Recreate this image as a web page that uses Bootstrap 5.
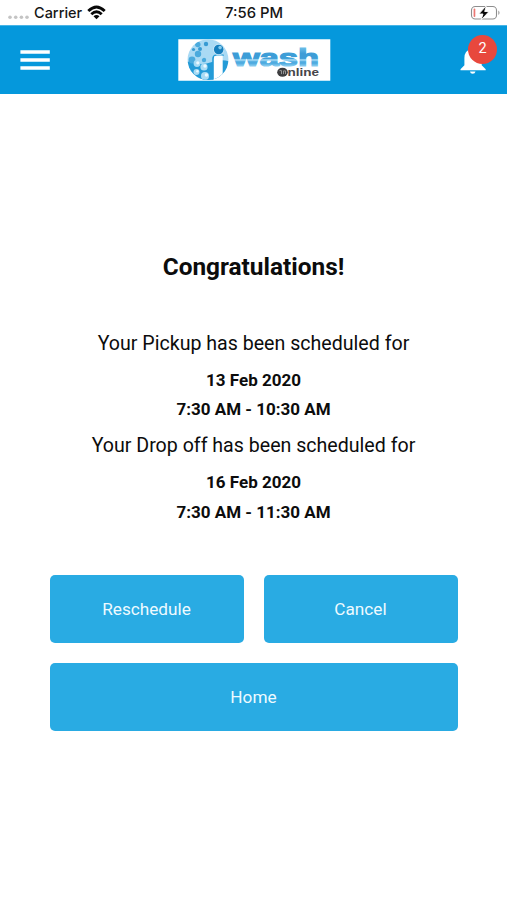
<!DOCTYPE html>
<html lang="en">
<head>
<meta charset="utf-8">
<meta name="viewport" content="width=device-width, initial-scale=1">
<title>iWash Online</title>
<link href="https://cdn.jsdelivr.net/npm/bootstrap@5.3.0/dist/css/bootstrap.min.css" rel="stylesheet">
<style>
body { font-family: Roboto, sans-serif; color: #0c0c0c; min-height: 900px; background: #fff; }
svg { display: block; }
.status-bar { height: 25px; font: 500 14.8px/26px Inter, sans-serif; color: #151515; padding: 0 6px 0 7px; }
.status-side { flex: 1 1 0; }
.carrier { font-size: 14.5px; margin: 0 5px 0 5px; }
.app-bar { height: 68.5px; background: #0598dc; padding: 0 20px; border-top: 1px solid #48b5e7; }
.brand-logo { margin: 0 2px 0 0; }
.menu-side { width: 30px; }
.bell { width: 26px; margin: 1px 1px 0 0; }
.count { top: -11.5px; left: 8px; width: 29px; height: 29px; background: #e8483d; color: #fff; font-size: 14.5px; line-height: 28px; }
.title { font-size: 24.4px; line-height: 32px; font-weight: 700; margin: 157.5px 0 42.5px; }
.label-line { font-size: 19.6px; line-height: 36px; }
.value-line { font-size: 17px; line-height: 29.4px; font-weight: 700; }
.actions { width: 408px; margin: 47.6px auto 0; gap: 20px; }
.action-row { gap: 20px; }
.btn-wash { --bs-btn-color: #eefaff; --bs-btn-bg: #29abe3; --bs-btn-hover-color: #fff; --bs-btn-hover-bg: #1c9cd4; --bs-btn-border-width: 0; --bs-btn-border-radius: 5px; --bs-btn-font-size: 17.2px; --bs-btn-padding-y: 0; height: 68px; padding-top: 2px; }
</style>
<script src="https://cdn.jsdelivr.net/npm/bootstrap@5.3.0/dist/js/bootstrap.bundle.min.js"></script>
</head>
<body>
<div class="status-bar d-flex align-items-center">
  <div class="status-side d-flex align-items-center">
    <svg width="22" height="26" fill="#c4c4c4"><circle cx="3" cy="17.3" r="1.8"/><circle cx="8.7" cy="17.3" r="1.8"/><circle cx="14.4" cy="17.3" r="1.8"/><circle cx="20" cy="17.3" r="1.8"/></svg>
    <span class="carrier">Carrier</span>
    <svg width="19" height="15" viewBox="0 0 19 15" fill="none" stroke="#080808" stroke-width="2.8"><path d="M1.3 6.1Q9.5-2 17.7 6.1M4.3 9.2q5.2-4.9 10.4 0"/><path d="M6.5 11.3q3-2.5 6 0l-3 3z" fill="#080808" stroke="none"/></svg>
  </div>
  <div>7:56 PM</div>
  <div class="status-side d-flex justify-content-end">
    <svg width="31" height="16" viewBox="0 0 31 16"><rect x="1.5" y="1.5" width="25" height="12.5" rx="3.8" fill="#fff" stroke="#8d8d8d" stroke-width="1.1"/><path d="M28.4 5.5q2.2 2.2 0 4.6z" fill="#8d8d8d"/><rect x="3.6" y="3.6" width="1.7" height="8.4" rx=".8" fill="#ec7773"/><path d="M16.4.6 8.8 9h4.2l-2 6.2 8-8.7h-4.3z" fill="#080808" stroke="#fff" stroke-width=".9"/></svg>
  </div>
</div>

<nav class="app-bar d-flex align-items-center justify-content-between">
  <a class="menu-side" href="#" aria-label="Menu"><svg width="30" height="20" fill="#fff"><path d="M.4.2h29.4v3.6H.4zM.4 8.2h29.4v3.6H.4zM.4 16.2h29.4v3.6H.4z"/></svg></a>
  <svg class="brand-logo" width="153" height="42" viewBox="0 0 153 42" role="img" aria-label="iWash Online">
    <defs>
      <clipPath id="disc"><circle cx="30" cy="20.6" r="20.4"/></clipPath>
      <linearGradient id="stripe" gradientUnits="userSpaceOnUse" x1="0" y1="9" x2="0" y2="27">
        <stop offset="0" stop-color="#69bce7"/><stop offset=".3" stop-color="#3d9dd7"/><stop offset=".58" stop-color="#3d9dd7"/><stop offset=".63" stop-color="#8fceef"/><stop offset=".71" stop-color="#8fceef"/><stop offset=".76" stop-color="#4eabe0"/><stop offset=".85" stop-color="#4eabe0"/><stop offset="1" stop-color="#8bcdef"/>
      </linearGradient>
    </defs>
    <path fill="#fff" d="M.3.3h152v41.5H.3z"/>
    <g clip-path="url(#disc)">
      <path fill="#aadaf4" d="M8 0h45v42H8z"/>
      <path fill="#249bd7" d="M8 23q6-1.5 11 1t15-1 19 0v20H8z"/>
      <path fill="#249bd7" d="M34.2 42V20q0-4.6 4-4.6h7.4v1.6H36V42z"/>
      <path fill="#fff" d="M35.8 42V20q0-3.6 3.6-3.6h5.3V42z"/>
      <g fill="#4aaadd"><circle cx="20" cy="15" r="3.2"/><circle cx="14" cy="21" r="3.4"/><circle cx="26" cy="21" r="2.2"/><circle cx="19.8" cy="5.5" r="2.7"/></g>
      <g fill="#a9dbf4"><circle cx="19" cy="24.5" r="3.4"/><circle cx="26" cy="28" r="3.6"/><circle cx="18.5" cy="33" r="3"/><circle cx="27" cy="37" r="4"/><circle cx="24" cy="18" r="1.5"/></g>
      <g fill="#eaf8ff"><circle cx="19.8" cy="23.8" r="1.6"/><circle cx="27" cy="27" r="1.7"/><circle cx="28.4" cy="36" r="1.7"/><circle cx="19.4" cy="32.2" r="1.2"/></g>
    </g>
    <g fill="#389bd3"><circle cx="28" cy="5" r="2.2"/><circle cx="22" cy="10" r="2"/><circle cx="15.5" cy="10.5" r="1.6"/></g>
    <circle cx="40.7" cy="10.5" r="5.5" fill="#cfeafa"/><circle cx="40.7" cy="10.5" r="4.8" fill="#167fbe"/><circle cx="42.1" cy="8.6" r="1.8" fill="#83ccee"/>
    <text x="55" y="27" font-family="Liberation Sans, sans-serif" font-weight="700" font-size="24.6" textLength="86" lengthAdjust="spacingAndGlyphs" fill="url(#stripe)" stroke="url(#stripe)" stroke-width="1.2">wash</text>
    <ellipse cx="104.5" cy="33.3" rx="5.3" ry="4.5" fill="#3d3d3f"/>
    <path d="M101.5 31.6h2v3.5M105.5 35.1v-3.2h2v3.2" fill="none" stroke="#aaa" stroke-width=".8"/>
    <text x="109.4" y="37" font-family="Liberation Sans, sans-serif" font-weight="700" font-size="10.4" textLength="31.5" lengthAdjust="spacingAndGlyphs" fill="#454549">nline</text>
  </svg>
  <a class="bell position-relative" href="#" aria-label="Notifications">
    <svg width="26" height="28" viewBox="0 0 26 28" fill="#fff"><path d="M13 1q2 0 2 2.1 6.7 1.7 6.7 9v7.2l4 4v1H.5v-1l3.9-4v-7.2q0-7.3 6.6-9Q11 1 13 1z"/><path d="M9.9 25.5h5.6q-.5 2.3-2.8 2.3t-2.8-2.3z"/></svg>
    <span class="count position-absolute rounded-circle text-center">2</span>
  </a>
</nav>

<main class="text-center">
  <h1 class="title">Congratulations!</h1>
  <section>
    <div class="label-line">Your Pickup has been scheduled for</div>
    <div class="value-line pt-1">13 Feb 2020</div>
    <div class="value-line">7:30 AM - 10:30 AM</div>
    <div class="label-line pt-1">Your Drop off has been scheduled for</div>
    <div class="value-line pt-1">16 Feb 2020</div>
    <div class="value-line">7:30 AM - 11:30 AM</div>
  </section>
  <div class="actions d-flex flex-column">
    <div class="action-row d-flex">
      <button class="btn btn-wash w-50" type="button">Reschedule</button>
      <button class="btn btn-wash w-50" type="button">Cancel</button>
    </div>
    <button class="btn btn-wash w-100" type="button">Home</button>
  </div>
</main>
</body>
</html>
